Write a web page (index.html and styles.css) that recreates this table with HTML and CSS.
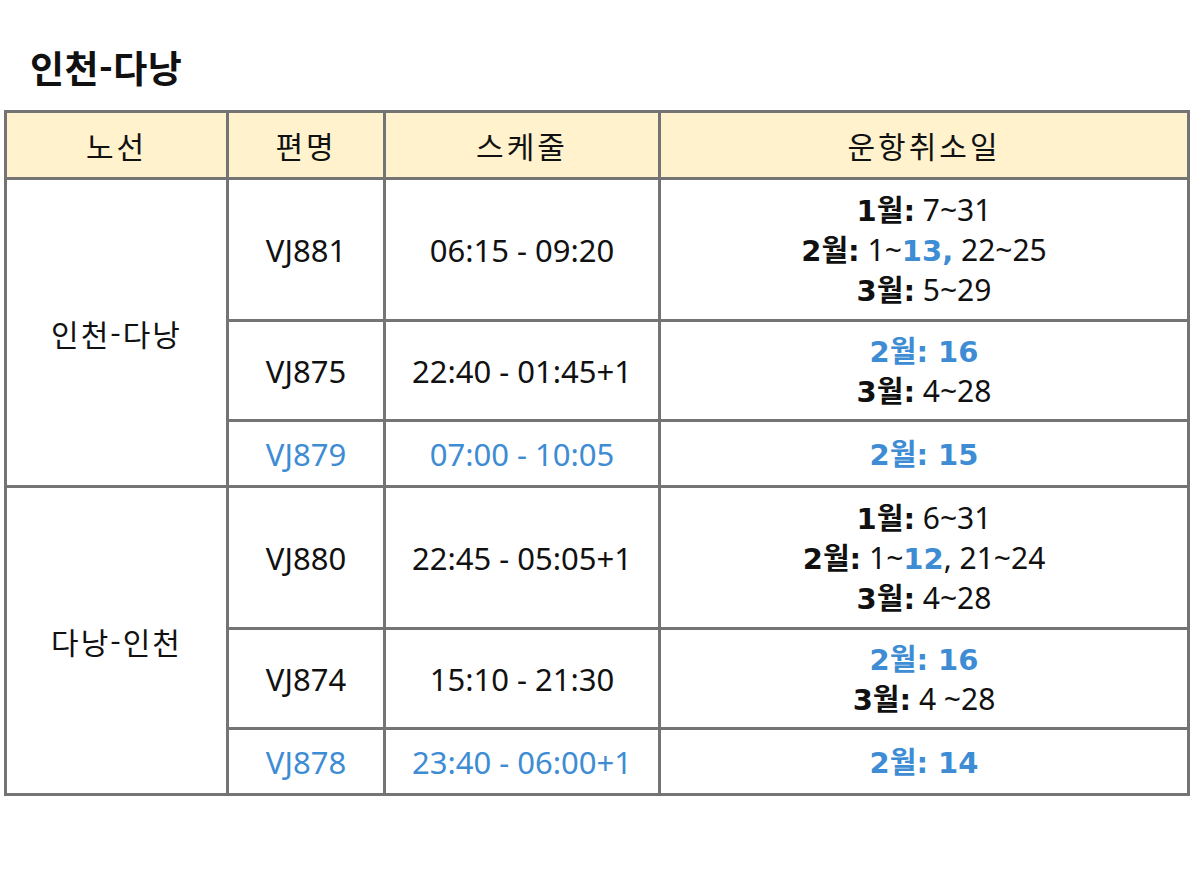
FILE: index.html
```html
<!DOCTYPE html>
<html lang="ko">
<head>
<meta charset="utf-8">
<link rel="stylesheet" href="styles.css">
</head>
<body>
<div class="page">
  <h1 class="title">인천-다낭</h1>
  <table class="sched">
    <colgroup>
      <col class="c1"><col class="c2"><col class="c3"><col class="c4">
    </colgroup>
    <thead>
      <tr class="hrow">
        <th>노선</th><th>편명</th><th>스케줄</th><th>운항취소일</th>
      </tr>
    </thead>
    <tbody>
      <tr class="r3">
        <td rowspan="3" class="route">인천-다낭</td>
        <td class="num">VJ881</td>
        <td class="num">06:15 - 09:20</td>
        <td class="days"><b>1월:</b> 7~31<br><b>2월:</b> 1~<b class="bl">13,</b> 22~25<br><b>3월:</b> 5~29</td>
      </tr>
      <tr class="r2">
        <td class="num">VJ875</td>
        <td class="num">22:40 - 01:45+1</td>
        <td class="days"><b class="bl">2월: 16</b><br><b>3월:</b> 4~28</td>
      </tr>
      <tr class="r1">
        <td class="num blue">VJ879</td>
        <td class="num blue">07:00 - 10:05</td>
        <td class="days"><b class="bl">2월: 15</b></td>
      </tr>
      <tr class="r3">
        <td rowspan="3" class="route">다낭-인천</td>
        <td class="num">VJ880</td>
        <td class="num">22:45 - 05:05+1</td>
        <td class="days"><b>1월:</b> 6~31<br><b>2월:</b> 1~<b class="bl">12</b>, 21~24<br><b>3월:</b> 4~28</td>
      </tr>
      <tr class="r2">
        <td class="num">VJ874</td>
        <td class="num">15:10 - 21:30</td>
        <td class="days"><b class="bl">2월: 16</b><br><b>3월:</b> 4 ~28</td>
      </tr>
      <tr class="r1">
        <td class="num blue">VJ878</td>
        <td class="num blue">23:40 - 06:00+1</td>
        <td class="days"><b class="bl">2월: 14</b></td>
      </tr>
    </tbody>
  </table>
</div>
</body>
</html>
```

FILE: styles.css
```css
html, body {
  margin: 0;
  padding: 0;
  background: #ffffff;
}

.page {
  padding: 0 0 0 4px;
  font-family: "Noto Sans", "Noto Sans CJK KR", sans-serif;
  color: #111;
}

.title {
  margin: 0;
  padding: 42px 0 0 26px;
  height: 110px;
  box-sizing: border-box;
  font-family: "Noto Sans CJK KR", sans-serif;
  font-weight: 700;
  font-size: 37px;
  line-height: 50px;
  letter-spacing: 0.5px;
  color: #111;
}

.sched {
  border-collapse: collapse;
  width: 1183px;
  table-layout: fixed;
}

.c1 { width: 222px; }
.c2 { width: 157px; }
.c3 { width: 275px; }
.c4 { width: 529px; }

.sched th,
.sched td {
  border: 3px solid #747474;
  text-align: center;
  vertical-align: middle;
  padding: 0;
}

.sched th {
  background: #fff2cc;
  font-family: "Noto Sans CJK KR", sans-serif;
  font-weight: 400;
  font-size: 30px;
  letter-spacing: 3px;
  height: 64px;
  color: #111;
}

.route {
  font-family: "Noto Sans CJK KR", sans-serif;
  font-size: 30px;
  letter-spacing: 2px;
  padding-bottom: 8px;
}

.num {
  font-size: 31px;
  letter-spacing: 0;
  padding-bottom: 6px;
}

.blue {
  color: #3d8cd4;
}

.days {
  font-size: 30px;
  line-height: 40px;
  letter-spacing: 0;
  padding-bottom: 3px;
}

.days b {
  font-family: "DejaVu Sans", "Noto Sans CJK KR", sans-serif;
  font-weight: 700;
  font-size: 29px;
  line-height: 1;
  letter-spacing: 0;
}

.days b.bl {
  color: #3d8cd4;
}

.r3 td { height: 139px; }
.r2 td { height: 97px; }
.r1 td { height: 63px; }
```
